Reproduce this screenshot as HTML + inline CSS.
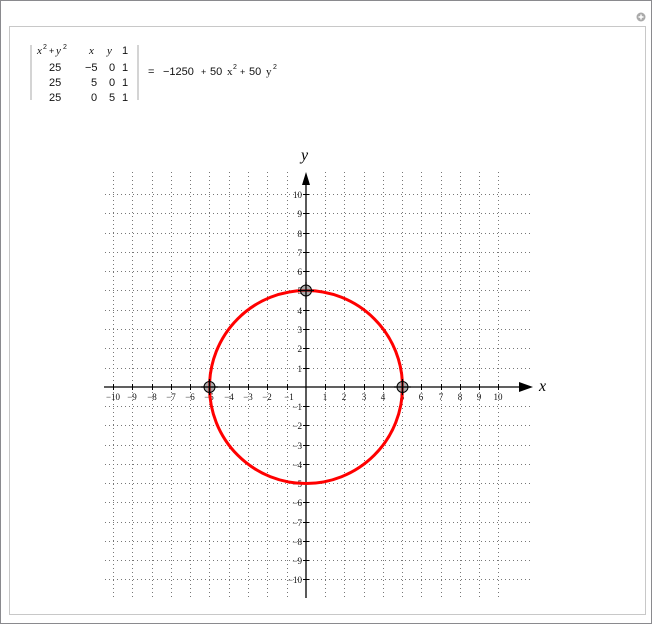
<!DOCTYPE html><html><head><style>body{margin:0;background:#fff;width:655px;height:627px;overflow:hidden}</style></head><body>
<svg width="655" height="627" xmlns="http://www.w3.org/2000/svg" font-family="Liberation Serif, serif">
<rect x="0.5" y="0.5" width="651" height="623" fill="#fff" stroke="#8a8a8e"/>
<rect x="9.5" y="26.5" width="636" height="588" fill="#fff" stroke="#c8c8c8"/>
<circle cx="641" cy="17" r="4.5" fill="#aaa"/><path d="M638.5 17h5M641 14.5v5" stroke="#fff" stroke-width="1.4"/>
<g font-size="11" fill="#111" font-family="Liberation Sans, sans-serif">
<line x1="31" y1="45" x2="31" y2="100" stroke="#aaa"/><line x1="138" y1="45" x2="138" y2="100" stroke="#aaa"/>
<text x="37" y="54" font-style="italic" font-family="Liberation Serif, serif">x</text><text x="43" y="49" font-size="7">2</text><text x="49" y="54" font-size="9">+</text><text x="56" y="54" font-style="italic" font-family="Liberation Serif, serif">y</text><text x="63" y="49" font-size="7">2</text>
<text x="89" y="54" font-style="italic" font-family="Liberation Serif, serif">x</text><text x="107" y="54" font-style="italic" font-family="Liberation Serif, serif">y</text><text x="122" y="54">1</text>
<text x="49" y="71">25</text><text x="85" y="71">−5</text><text x="109" y="71">0</text><text x="122" y="71">1</text>
<text x="49" y="86">25</text><text x="91" y="86">5</text><text x="109" y="86">0</text><text x="122" y="86">1</text>
<text x="49" y="101">25</text><text x="91" y="101">0</text><text x="109" y="101">5</text><text x="122" y="101">1</text>
<text x="148" y="75">=</text><text x="163" y="75">−1250</text><text x="201" y="75" font-size="9">+</text><text x="210" y="75">50</text><text x="227" y="75" font-family="Liberation Serif, serif">x</text><text x="233" y="69" font-size="7">2</text>
<text x="240" y="75" font-size="9">+</text><text x="249" y="75">50</text><text x="266" y="75" font-family="Liberation Serif, serif">y</text><text x="273" y="69" font-size="7">2</text>
</g>
<g id="grid" stroke="#777" stroke-width="1" stroke-dasharray="1,3">
<path d="M113.5 172V598M132.5 172V598M152.5 172V598M171.5 172V598M190.5 172V598M209.5 172V598M229.5 172V598M248.5 172V598M267.5 172V598M287.5 172V598M325.5 172V598M344.5 172V598M364.5 172V598M383.5 172V598M402.5 172V598M421.5 172V598M441.5 172V598M460.5 172V598M479.5 172V598M498.5 172V598"/>
<path d="M105 194.5H531M105 213.5H531M105 233.5H531M105 252.5H531M105 271.5H531M105 290.5H531M105 310.5H531M105 329.5H531M105 348.5H531M105 368.5H531M105 406.5H531M105 425.5H531M105 445.5H531M105 464.5H531M105 483.5H531M105 502.5H531M105 522.5H531M105 541.5H531M105 560.5H531M105 579.5H531"/>
</g>
<g stroke="#000" stroke-width="1.3">
<line x1="104" y1="387" x2="522" y2="387"/><line x1="306" y1="598" x2="306" y2="182"/>
<path d="M113.5 384v6M132.5 384v6M152.5 384v6M171.5 384v6M190.5 384v6M209.5 384v6M229.5 384v6M248.5 384v6M267.5 384v6M287.5 384v6M325.5 384v6M344.5 384v6M364.5 384v6M383.5 384v6M402.5 384v6M421.5 384v6M441.5 384v6M460.5 384v6M479.5 384v6M498.5 384v6" stroke-width="1"/>
<path d="M303 194.5h6M303 213.5h6M303 233.5h6M303 252.5h6M303 271.5h6M303 290.5h6M303 310.5h6M303 329.5h6M303 348.5h6M303 368.5h6M303 406.5h6M303 425.5h6M303 445.5h6M303 464.5h6M303 483.5h6M303 502.5h6M303 522.5h6M303 541.5h6M303 560.5h6M303 579.5h6" stroke-width="1"/>
</g>
<path d="M533 387l-14-5v10z" fill="#000"/><path d="M306 172l-4 13h8z" fill="#000"/>
<text x="539" y="391" font-size="16" font-style="italic">x</text><text x="301" y="160" font-size="16" font-style="italic">y</text>
<g font-size="9" text-anchor="middle" fill="#111">
<text x="113" y="400">−10</text><text x="132" y="400">−9</text><text x="152" y="400">−8</text><text x="171" y="400">−7</text><text x="190" y="400">−6</text><text x="209" y="400">−5</text><text x="229" y="400">−4</text><text x="248" y="400">−3</text><text x="267" y="400">−2</text><text x="289" y="400">−1</text><text x="325" y="400">1</text><text x="344" y="400">2</text><text x="364" y="400">3</text><text x="383" y="400">4</text><text x="402" y="400">5</text><text x="421" y="400">6</text><text x="441" y="400">7</text><text x="460" y="400">8</text><text x="479" y="400">9</text><text x="498" y="400">10</text>
</g>
<g font-size="9" text-anchor="end" fill="#111">
<text x="302" y="198">10</text><text x="302" y="217">9</text><text x="302" y="237">8</text><text x="302" y="256">7</text><text x="302" y="275">6</text><text x="302" y="294">5</text><text x="302" y="314">4</text><text x="302" y="333">3</text><text x="302" y="352">2</text><text x="302" y="372">1</text>
<text x="302" y="410">−1</text><text x="302" y="429">−2</text><text x="302" y="449">−3</text><text x="302" y="468">−4</text><text x="302" y="487">−5</text><text x="302" y="506">−6</text><text x="302" y="526">−7</text><text x="302" y="545">−8</text><text x="302" y="564">−9</text><text x="302" y="583">−10</text>
</g>
<circle cx="306" cy="387" r="96.5" fill="none" stroke="#f00" stroke-width="3"/>
<g fill="rgba(120,120,120,0.6)" stroke="#000" stroke-width="1">
<circle cx="209.5" cy="387" r="5.5"/><circle cx="402.5" cy="387" r="5.5"/><circle cx="306" cy="290.5" r="5.5"/>
</g>
<path d="M201 387h17M209.5 379v16M394 387h17M402.5 379v16M298 290.5h16M306 282v17" stroke="#000" stroke-width="1.2"/>
</svg>
</body></html>
